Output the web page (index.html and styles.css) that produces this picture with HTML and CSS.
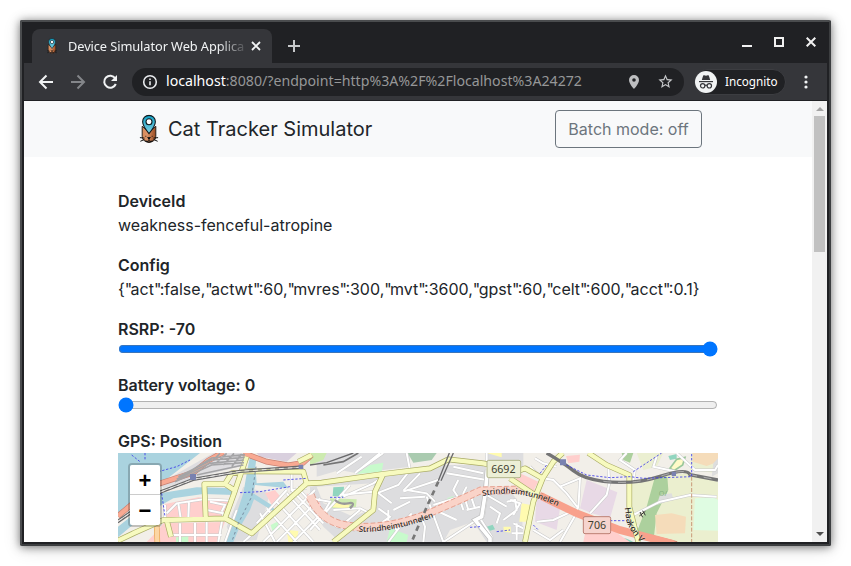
FILE: index.html
```html
<!DOCTYPE html>
<html lang="en">
<head>
<meta charset="utf-8">
<title>Device Simulator Web Application</title>
<link rel="stylesheet" href="styles.css">
</head>
<body>
<svg class="defs" width="0" height="0">
  <defs>
    <linearGradient id="fur" x1="0" x2="1"><stop offset="0" stop-color="#d88a58"/><stop offset=".35" stop-color="#dc9468"/><stop offset="1" stop-color="#984a20"/></linearGradient>
    <linearGradient id="pin" x1="0" x2="0" y1="0" y2="1"><stop offset="0" stop-color="#10a0c4"/><stop offset=".5" stop-color="#49b8d3"/><stop offset="1" stop-color="#85d3e5"/></linearGradient>
    <symbol id="cat" viewBox="0 0 22 32">
      <path d="M3.500 13 8 17h6l4.500-4V24q0 5.500-7.500 7-7.500-1.500-7.500-7Z" fill="url(#fur)" stroke="#1c1714" stroke-width="1"/>
      <path d="M1 25.500 6 26M1.500 29.500 6 27.500M21 25.500 16 26M20.500 29.500 16 27.500M9.500 25.500h3L11 27Zm1.500 1.500v2M7 29q2 2 4 0 2 2 4 0M7.500 23.500v1M14.500 23.500v1" fill="#111" stroke="#111" stroke-width="1.100"/>
      <path d="M11 21Q4 12.500 4 8a7 7 0 0 1 14 0Q18 12.500 11 21Z" fill="url(#pin)" stroke="#10191d" stroke-width="1.200"/>
      <circle cx="11" cy="8" r="3.300" fill="#fff" stroke="#10191d" stroke-width="1.200"/>
    </symbol>
  </defs>
</svg>
<div class="window">
  <header class="titlebar">
    <div class="tab">
      <svg class="favicon" viewBox="0 0 22 32"><use href="#cat"/></svg>
      <span class="tab-title">Device Simulator Web Applica</span>
      <svg class="tab-close" viewBox="0 0 10 10"><path d="m1 1 8 8m0-8-8 8"/></svg>
    </div>
    <svg class="new-tab" viewBox="0 0 12 12"><path d="M6 0v12M0 6h12"/></svg>
    <div class="controls">
      <svg viewBox="0 0 10 10"><path d="M0 9h10"/></svg>
      <svg viewBox="0 0 10 10"><path d="M1 1h8v8H1Z"/></svg>
      <svg viewBox="0 0 10 10"><path d="m.7.7 8.600 8.600m0-8.600L.7 9.300"/></svg>
    </div>
  </header>
  <div class="toolbar">
    <svg class="nav" viewBox="0 0 16 16"><path d="M15 8H2m6.500-6.500L2 8l6.500 6.500"/></svg>
    <svg class="nav dim" viewBox="0 0 16 16"><path d="M1 8h13M7.500 1.500 14 8l-6.500 6.500"/></svg>
    <svg class="nav" viewBox="0 0 16 16"><path d="M13.200 4.300A6 6 0 1 0 13.800 10"/><path class="solid" d="M15 1v6H9Z"/></svg>
    <div class="omnibox">
      <svg class="info" viewBox="0 0 16 16"><circle cx="8" cy="8" r="6.300"/><path d="M8 7.200v4M8 4.500v1.500"/></svg>
      <span class="url"><b>localhost</b>:8080/?endpoint=http%3A%2F%2Flocalhost%3A24272</span>
      <svg class="place" viewBox="0 0 10 14"><path d="M5 0a5 5 0 0 0-5 5c0 3.700 5 9 5 9s5-5.300 5-9a5 5 0 0 0-5-5Zm0 3.200a1.800 1.800 0 1 1 0 3.600 1.800 1.800 0 0 1 0-3.600Z" fill-rule="evenodd"/></svg>
      <svg class="star" viewBox="0 0 24 24"><path d="m22 9.240-7.190-.62L12 2 9.190 8.630 2 9.240l5.460 4.730L5.820 21 12 17.270 18.180 21l-1.630-7.030L22 9.240ZM12 15.400l-3.760 2.270 1-4.280-3.320-2.880 4.380-.38L12 6.100l1.710 4.040 4.380.38-3.320 2.880 1 4.280L12 15.400Z"/></svg>
    </div>
    <div class="profile">
      <svg viewBox="0 0 22 22"><circle cx="11" cy="11" r="11" fill="#f1f3f4"/><path d="M6.800 9 8.200 4.600Q8.500 4 9.200 4.300l1.800.4 1.800-.4q.7-.3 1 .3L15.200 9Z" fill="#35363a"/><path d="M4 10.600h14" stroke="#35363a" stroke-width="1.200"/><g fill="none" stroke="#35363a" stroke-width="1.200"><circle cx="7.700" cy="14.800" r="2.200"/><circle cx="14.300" cy="14.800" r="2.200"/><path d="M9.900 14.500q1.100-.7 2.200 0"/></g></svg>
      <span>Incognito</span>
    </div>
    <svg class="menu" viewBox="0 0 4 14"><circle cx="2" cy="2" r="1.600"/><circle cx="2" cy="7" r="1.600"/><circle cx="2" cy="12" r="1.600"/></svg>
  </div>
  <div class="viewport">
    <main class="page">
      <nav class="navbar">
        <div class="navbar-inner">
          <svg class="logo" viewBox="0 0 22 32"><use href="#cat"/></svg>
          <span class="brand">Cat Tracker Simulator</span>
          <button class="batch">Batch mode: off</button>
        </div>
      </nav>
      <div class="content">
        <section><h4>DeviceId</h4><p>weakness-fenceful-atropine</p></section>
        <section><h4>Config</h4><p>{<i>"</i>act<i>"</i>:false,<i>"</i>actwt<i>"</i>:60,<i>"</i>mvres<i>"</i>:300,<i>"</i>mvt<i>"</i>:3600,<i>"</i>gpst<i>"</i>:60,<i>"</i>celt<i>"</i>:600,<i>"</i>acct<i>"</i>:0.1}</p></section>
        <section><h4>RSRP: -70</h4><input type="range" min="-140" max="-70" value="-70"></section>
        <section><h4>Battery voltage: 0</h4><input type="range" min="0" max="100" value="0"></section>
        <section>
          <h4>GPS: Position</h4>
          <div class="map">
            <svg class="tiles" viewBox="24 69 1800 267" preserveAspectRatio="none">
              <rect x="24" y="69" width="1800" height="267" fill="#f2efe9"/>
              <!-- land use -->
              <path fill="#dddddf" d="M730 150 830 135 1000 105 1130 105 1135 190 1200 180 1235 230 1240 336H690L640 290 600 225 600 170ZM620 69H900V110L740 130 690 120 620 140ZM1130 69H1240V120L1130 110ZM400 170 480 190 440 330 370 336 350 290Z"/>
              <path fill="#f2efe9" d="M620 170 790 160 800 230 730 260 640 220ZM1020 300 1090 275 1130 336H1000Z"/>
              <path fill="#aad3df" d="M24 69H270L160 155 70 220 24 262Z"/>
              <path fill="#aad3df" d="M24 290 150 190 260 172 370 175 372 195 280 192 190 205 110 250 24 322Z"/>
              <path fill="#aad3df" d="M420 80H440L436 110 440 160 520 155 535 175 435 165 430 190 485 225 500 250 432 208 420 240 385 300 370 336H342L380 250 400 190 412 120Z"/>
              <path fill="#ffcfcd" d="M165 222 265 202 370 210 345 265 170 268ZM160 280 345 276 320 336H110L145 300ZM465 190 495 180 515 205 490 232ZM590 190 630 215 635 250 600 235ZM1230 130 1285 155 1270 182 1215 150Z"/>
              <path fill="#dedde0" d="M310 69H405L395 108 250 145 160 175 150 160Z"/>
              <path fill="#d9d0de" d="M440 69H560L530 95 450 80Z"/>
              <path fill="#e8d9e6" d="M1430 150 1522 187 1500 265 1445 250 1410 235ZM1280 205 1350 235 1340 300 1275 275Z"/>
              <path fill="#aacbb0" d="M893 69H980L965 90 910 98Z"/>
              <path fill="#c8facc" d="M780 105 820 98 815 125 740 132ZM840 295 895 315 890 336H830ZM1012 204 1030 198 1032 220 1015 220ZM482 285 502 275 510 297 488 305ZM198 322 235 318 235 336H198Z"/>
              <path fill="#91d5bf" d="M670 172 702 170 700 200 668 198ZM1130 290 1148 284 1155 298 1140 302ZM1675 78 1700 72 1700 86 1680 90ZM1495 336Q1530 310 1570 336Z"/>
              <path fill="#cdebb0" d="M660 205 740 208 738 232 660 235ZM600 69H650L640 90 600 105Z"/>
              <path fill="#fffbb0" d="M530 300 565 303 560 336H535ZM668 218 720 222 715 235 668 232ZM1235 220 1262 225 1250 275 1228 275ZM1075 95 1090 90 1090 105ZM1130 69H1175V82ZM1180 290 1202 290 1202 308 1182 305Z"/>
              <path fill="#ebefcf" d="M1560 160 1630 140 1730 130 1824 155V336H1630L1570 270Z"/>
              <path fill="#ebefd1" d="M1580 69H1660L1640 110 1600 120ZM1745 69H1824V130L1740 120Z"/>
              <path fill="#acd09d" d="M1635 140 1672 140 1675 180 1640 250 1632 318 1578 312 1610 230ZM1535 69H1570L1560 98 1540 90Z"/>
              <path fill="#f5dcba" d="M1635 255 1685 250 1728 260 1725 310 1640 312ZM1748 69H1824V95L1790 108 1748 95Z"/>
              <path fill="#dffce2" d="M1755 205 1810 200 1824 210V302L1750 300Z"/>
              <path fill="#fffbc8" stroke="#9ac79b" stroke-width="5" d="M1680 115 1700 88 1725 82 1718 105 1692 122Z"/>
              <path fill="#dedede" d="M1650 195 1685 190 1690 208 1640 225ZM1810 100 1824 85V130L1805 140Z"/>
              <path fill="#ffcfcd" d="M1368 78 1410 74 1408 95 1375 100ZM1430 285 1500 295 1560 336H1420Z"/>
              <!-- small streets -->
              <g fill="none" stroke="#c9c9c9" stroke-width="9"><path id="streets" d="M170 250 200 220 280 208 370 212M205 220 212 265M237 213 235 265M165 225V265M290 240 340 250 325 336M380 240 345 336M300 215 345 225 335 245M175 315H335M210 280V336M255 278V336M290 276V336M545 120V180L590 175M450 250 495 336M470 235 560 336M500 215 610 336M530 190 630 300M545 180 640 280M560 170 620 235M585 170 400 336M615 180 460 336M630 205 500 336M640 245 550 336M440 280 530 180M600 215 680 290 735 300M600 300 720 165M680 130 755 80M700 200 790 160 820 140M640 250 660 215 600 205M670 240 750 235 780 250M690 290 750 240M690 195 790 185M735 130 810 69M820 69 740 125M890 69 900 120 865 165 800 190M800 185 845 220M880 182 930 130M880 185 985 150M890 180 950 190 975 215M870 205 945 200M805 235 840 260 800 290M835 240V270L860 300M900 215 850 240M950 200 1000 336M970 225 1050 200M975 240 1040 270M905 250 870 290 835 336M930 250 945 290 940 336M1100 270 1000 336M1070 240 1110 230M1105 180 1085 205 1095 235M1045 150 1030 180 1050 210 1060 240M1070 170 1060 190 1075 240M1010 130 1130 150M1030 110 1120 130M1130 69V120M1110 265 1145 320V336M1120 260 1130 195 1190 230M1190 215 1215 210 1220 240 1180 270M1140 230 1170 250 1160 280M1275 85 1300 100 1340 110M1260 110 1290 140M1300 145 1330 150 1370 190 1405 235M1350 170 1410 145 1405 235M1495 110 1498 160 1490 195 1440 250M1405 235 1330 270 1280 275M1405 240 1350 336M1270 300 1320 330 1360 300M1570 255 1650 215 1740 195 1820 200M1550 69 1530 90 1575 120 1570 150M1640 80 1630 110 1700 125M1700 69 1755 120 1815 120 1824 105M1200 210 1230 220 1210 255M1210 280 1240 295M1205 310H1240M1220 280V330"/></g>
              <g fill="none" stroke="#fff" stroke-width="6"><use href="#streets"/></g>
              <path fill="none" stroke="#bbb" stroke-width="15" d="M1132 120 1126 190 1115 260 1095 270 1140 325V336"/><path fill="none" stroke="#fff" stroke-width="11" d="M1132 120 1126 190 1115 260 1095 270 1140 325V336"/>
              <!-- secondary and primary roads -->
              <g fill="none" stroke-linejoin="round"><path d="M600 195Q625 265 690 282T830 285Q900 275 980 240T1110 182L1240 178 1300 200" stroke="#fad3c8" stroke-width="23"/><path d="M612 190Q634 255 690 271T830 275Q900 264 980 229T1110 171L1240 168M590 205Q620 275 690 293T830 296Q900 285 980 251T1110 193L1240 190" stroke="#df9482" stroke-width="2.500" stroke-dasharray="14 7"/></g>
              <g fill="none" stroke="#c98072" stroke-width="17"><path id="red" d="M24 258 135 165 250 128 295 92 340 66M400 69 470 95 535 106 580 98 605 75M1290 195 1400 250 1530 300 1700 342"/></g>
              <g fill="none" stroke="#f8a992" stroke-width="13"><use href="#red"/></g>
              <path d="M1295 199 1400 250 1530 300 1690 342" fill="none" stroke="#f8a18c" stroke-width="23"/>
              <path d="M140 285 142 336" fill="none" stroke="#e8a552" stroke-width="17"/><path d="M140 285 142 336" fill="none" stroke="#fcd6a4" stroke-width="13"/>
              <g fill="none" stroke="#aaac65" stroke-width="17" stroke-linejoin="round"><path id="yellow" d="M24 332 70 310 160 270 345 265 425 310 590 160 580 125 400 124 365 130 345 162 283 162 287 262M345 162 375 182 410 80M170 270 183 320M345 265 375 182M590 160 635 158 820 132 960 115 1015 88 1120 100 1220 125 1245 115 1298 145 1270 215 1245 336M1200 145 1275 195M1298 145 1330 95 1358 69M1435 69 1490 105 1558 135V230L1585 336M820 132 795 185 790 240 670 336M565 95 605 75"/></g>
              <g fill="none" stroke="#f7fabf" stroke-width="13" stroke-linejoin="round"><use href="#yellow"/></g>
              <!-- railways -->
              <g fill="none" stroke="#a4a4a6" stroke-width="5"><path d="M195 155 305 105 402 98M200 148 300 100 402 90M205 140 305 90 404 82M230 130 305 84 405 74M330 70 310 90M350 70 320 98M372 70 340 105M395 72 365 110M260 135 400 105"/></g>
              <g fill="none" stroke="#69696b" stroke-width="4"><path d="M24 270 150 183 250 145 390 121 580 108M24 278 155 188 250 151 390 127 580 114M600 105 650 98 730 69M1018 69 985 152M1030 69 993 152"/></g>
              <path d="M24 274 150 187 250 148 390 124 580 111" fill="none" stroke="#e5e5e5" stroke-width="3" stroke-dasharray="14 12"/>
              <path d="M1310 69Q1360 98 1390 122T1480 154Q1570 165 1650 139T1740 134L1824 150" fill="none" stroke="#747475" stroke-width="10"/>
              <path d="M1480 154Q1570 165 1650 139T1740 134L1824 150" fill="none" stroke="#ccc" stroke-width="2" stroke-dasharray="24 20"/>
              <path d="M985 155 955 220 920 300 905 336" fill="none" stroke="#777" stroke-width="8" stroke-dasharray="16 13"/>
              <path d="M640 105 700 95 745 69" fill="none" stroke="#747475" stroke-width="5"/>
              <g fill="none" stroke="#3a38e8" stroke-width="2.500" stroke-dasharray="7 5"><path d="M65 75 90 95M105 69V90M145 125 200 110 240 90M155 190 165 260M390 188 450 185 540 170M520 150 590 145M660 202H700M1080 292 1110 290M1370 105 1430 135 1500 143 1560 140 1600 145 1745 140V69M1570 125 1655 69M1500 272H1550M1160 305 1200 300M1270 285 1285 300M1290 130 1310 105"/></g>
              <path d="M1745 140V336" stroke="#c99a78" stroke-width="3" stroke-dasharray="12 5"/>
              <path d="M438 110 425 200 385 280 365 336" fill="none" stroke="#788ca0" stroke-width="3" stroke-dasharray="8 8"/>
              <g fill="#7981b0"><path d="M240 132h18v18h-18ZM566 104h13v13h-13ZM1350 88h18v18h-18ZM1685 125h13v13h-13Z"/></g>
              <path d="M675 210Q690 225 715 220T720 235" fill="none" stroke="#999" stroke-width="7"/>
              <path d="m1588 258 18-14m-16 2 8 16m0-20 8 14" stroke="#333" stroke-width="3"/>
              <text x="1646" y="197" class="faint">O/</text>
              <!-- road signs and names -->
              <rect x="1131" y="91" width="101" height="52" rx="5" fill="#ecefd6" stroke="#b2b68a" stroke-width="3"/><text class="shield" x="1180" y="129">6692</text>
              <rect x="1420" y="260" width="82" height="51" rx="5" fill="#f6d4ce" stroke="#bd8175" stroke-width="3"/><text class="shield" x="1461" y="296">706</text>
              <path id="name1" d="M746 306Q860 307 980 258" fill="none"/><text class="road"><textPath href="#name1">Strindheimtunnelen</textPath></text>
              <path id="name2" d="M1118 199Q1220 174 1334 225L1370 243" fill="none"/><text class="road"><textPath href="#name2">Strindheimtunnelen</textPath></text>
              <path id="name3" d="M1544 233 1550 275Q1556 298 1590 336L1610 360" fill="none"/><text class="road large"><textPath href="#name3">Haakon V</textPath></text>
            </svg>
            <div class="zoom"><button>+</button><button>−</button></div>
          </div>
        </section>
      </div>
    </main>
    <aside class="scrollbar"><span class="up"></span><div class="thumb"></div><span class="down"></span></aside>
  </div>
</div>
</body>
</html>
```
FILE: styles.css
```css
* { box-sizing: border-box; }
body { margin: 0; padding: 20px; width: 851px; height: 566px; overflow: hidden; background: #fff; font-family: Inter, "Liberation Sans", sans-serif; }
svg { display: block; flex: none; }
button { font: inherit; margin: 0; }
.defs { position: absolute; }

.window { width: 811px; height: 526px; border: 2px solid #4a4c4e; border-right-color: #3c3e40; border-bottom-color: #3c3e40; border-radius: 2px; background: #202124; box-shadow: 0 1px 8px rgba(0,0,0,.5), 0 3px 18px rgba(0,0,0,.14); overflow: hidden; padding: 0 2px 2px; display: flex; flex-direction: column; }

.titlebar { height: 41px; flex: none; display: flex; align-items: flex-end; padding-left: 8px; }
.tab { width: 240px; height: 34px; border-radius: 8px 8px 0 0; background: #35363a; display: flex; align-items: center; padding: 0 11px 0 14px; }
.favicon { width: 12px; height: 16px; margin-right: 10px; }
.tab-title { width: 176px; white-space: nowrap; font: 12.8px "Noto Sans", sans-serif; letter-spacing: -.08px; color: #f1f3f4; -webkit-mask-image: linear-gradient(90deg, #000 150px, rgba(0,0,0,.15)); mask-image: linear-gradient(90deg, #000 150px, rgba(0,0,0,.15)); }
.tab-close { width: 10px; height: 10px; margin-left: 7px; fill: none; stroke: #f1f3f4; stroke-width: 1.8; }
.new-tab { width: 12px; height: 12px; margin: 0 0 11px 16px; stroke: #c6c8ca; stroke-width: 2; }
.controls { margin-left: auto; display: flex; gap: 22px; padding: 0 11px 16px 0; fill: none; stroke: #f1f1f1; stroke-width: 2; }
.controls svg { width: 10px; height: 10px; }

.toolbar { height: 38px; flex: none; background: #35363a; border-bottom: 1px solid #202124; display: flex; align-items: center; padding: 0 19px 0 14px; }
.nav { width: 16px; height: 16px; margin-right: 16px; fill: none; stroke: #f1f3f4; stroke-width: 2; }
.nav.dim { stroke: #84868a; }
.nav .solid { fill: #f1f3f4; stroke: none; }
.omnibox { width: 552px; height: 28px; margin-left: -2px; border-radius: 14px; background: #202124; display: flex; align-items: center; padding: 0 11px 0 10px; }
.info { width: 16px; height: 16px; fill: none; stroke: #e8eaed; stroke-width: 1.6; }
.url { margin-left: 8px; padding-bottom: 2px; font: 14.17px "Noto Sans", sans-serif; color: #969798; flex: 1; white-space: nowrap; }
.url b { font-weight: 400; color: #fff; }
.place { width: 10px; height: 14px; fill: #bdbec0; margin-right: 18px; }
.star { width: 17px; height: 17px; fill: #c6c8ca; margin-right: -1px; }
.profile { width: 92px; height: 26px; margin-left: 10px; border: 1px solid #3c3d41; border-radius: 13px; background: #202124; color: #fff; font: 11.7px "Noto Sans", sans-serif; display: flex; align-items: center; }
.profile span { padding-bottom: 2px; }
.profile svg { width: 22px; height: 22px; margin: 0 8px 0 0; }
.menu { width: 4px; height: 14px; fill: #f1f3f4; margin-left: auto; }

.viewport { flex: 1; min-height: 0; display: flex; background: #fff; }
.page { width: 788px; overflow: hidden; color: #212529; }
.navbar { height: 56px; background: #f8f9fa; }
.navbar-inner { width: 564px; height: 56px; margin-left: 114px; display: flex; align-items: center; }
.logo { width: 20px; height: 30px; margin-left: 1px; }
.brand { font-size: 20px; line-height: 30px; margin-left: 9px; white-space: nowrap; }
.batch { margin-left: auto; width: 147px; height: 38px; padding: 0; border: 1px solid #6c757d; border-radius: 4px; background: transparent; color: #6c757d; font-size: 16px; flex: none; }
.content { width: 600px; margin: 32px 0 0 94px; font-size: 16px; line-height: 24px; }
section { margin-bottom: 16px; }
h4 { margin: 0; font-size: 16px; font-weight: 600; line-height: 24px; }
p { margin: 0; white-space: nowrap; }
p i { font-style: normal; letter-spacing: -1.7px; }
input[type=range] { display: block; width: 100%; height: 16px; margin: 0; accent-color: #0075ff; }
.map { height: 89px; position: relative; overflow: hidden; }
.tiles { width: 600px; height: 89px; }
.tiles text { font-family: "Noto Sans", sans-serif; }
.tiles .shield { font-size: 32px; text-anchor: middle; fill: #40402e; }
.tiles .road { font-size: 24px; font-weight: 500; fill: #2b2724; stroke: #fff; stroke-width: 2px; stroke-opacity: .4; paint-order: stroke; }
.tiles .large { font-size: 26px; }
.tiles .faint { font-size: 22px; fill: #86b381; }
.zoom { position: absolute; left: 10px; top: 10px; width: 34px; height: 64px; border: 2px solid rgba(0,0,0,.2); border-radius: 4px; background-clip: padding-box; overflow: hidden; }
.zoom button { display: block; width: 30px; height: 30px; padding: 2px 0 0; border: 0; background: #fff; color: #000; font: bold 22px/28px "Liberation Sans", sans-serif; }
.zoom button:first-child { padding-top: 3px; line-height: 26px; border-bottom: 1px solid #ccc; }
.scrollbar { width: 15px; background: #f1f1f1; display: flex; flex-direction: column; align-items: center; }
.up, .down { border: 4px solid transparent; width: 0; height: 0; }
.up { border-bottom-color: #a3a3a3; border-top-width: 0; margin-top: 6px; }
.down { border-top-color: #505050; border-bottom-width: 0; margin: auto 0 6px; }
.thumb { width: 11px; height: 136px; margin-top: 5px; background: #c1c1c1; }
```
